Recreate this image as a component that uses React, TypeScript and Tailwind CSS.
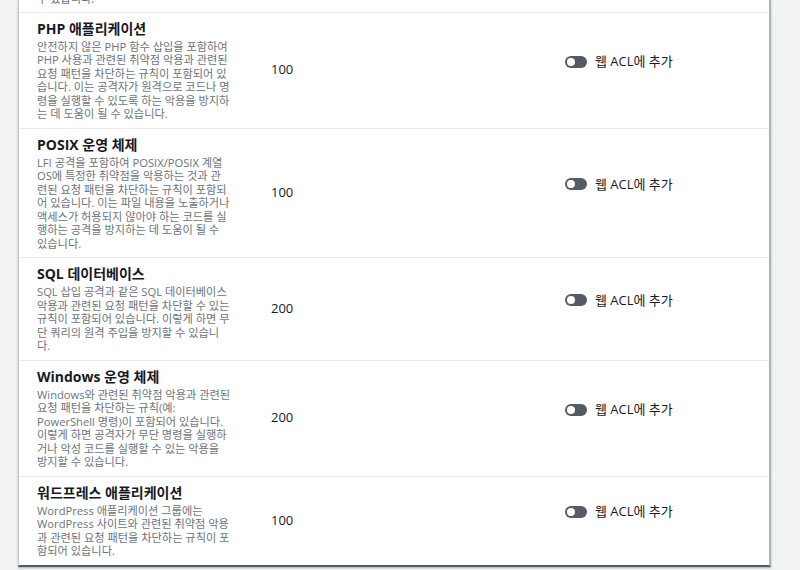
import React from 'react';

type Rule = {
  title: string;
  lines: string[];
  capacity: number;
};

const RULES: Rule[] = [
  {
    title: 'PHP 애플리케이션',
    lines: [
      '안전하지 않은 PHP 함수 삽입을 포함하여',
      'PHP 사용과 관련된 취약점 악용과 관련된',
      '요청 패턴을 차단하는 규칙이 포함되어 있',
      '습니다. 이는 공격자가 원격으로 코드나 명',
      '령을 실행할 수 있도록 하는 악용을 방지하',
      '는 데 도움이 될 수 있습니다.',
    ],
    capacity: 100,
  },
  {
    title: 'POSIX 운영 체제',
    lines: [
      'LFI 공격을 포함하여 POSIX/POSIX 계열',
      'OS에 특정한 취약점을 악용하는 것과 관',
      '련된 요청 패턴을 차단하는 규칙이 포함되',
      '어 있습니다. 이는 파일 내용을 노출하거나',
      '액세스가 허용되지 않아야 하는 코드를 실',
      '행하는 공격을 방지하는 데 도움이 될 수',
      '있습니다.',
    ],
    capacity: 100,
  },
  {
    title: 'SQL 데이터베이스',
    lines: [
      'SQL 삽입 공격과 같은 SQL 데이터베이스',
      '악용과 관련된 요청 패턴을 차단할 수 있는',
      '규칙이 포함되어 있습니다. 이렇게 하면 무',
      '단 쿼리의 원격 주입을 방지할 수 있습니',
      '다.',
    ],
    capacity: 200,
  },
  {
    title: 'Windows 운영 체제',
    lines: [
      'Windows와 관련된 취약점 악용과 관련된',
      '요청 패턴을 차단하는 규칙(예:',
      'PowerShell 명령)이 포함되어 있습니다.',
      '이렇게 하면 공격자가 무단 명령을 실행하',
      '거나 악성 코드를 실행할 수 있는 악용을',
      '방지할 수 있습니다.',
    ],
    capacity: 200,
  },
  {
    title: '워드프레스 애플리케이션',
    lines: [
      'WordPress 애플리케이션 그룹에는',
      'WordPress 사이트와 관련된 취약점 악용',
      '과 관련된 요청 패턴을 차단하는 규칙이 포',
      '함되어 있습니다.',
    ],
    capacity: 100,
  },
];

function Toggle() {
  return (
    <span className="relative inline-flex h-[12px] w-[22px] shrink-0 items-center rounded-full bg-[#545b64]">
      <span className="ml-[2px] h-[8px] w-[8px] rounded-full bg-white" />
    </span>
  );
}

function RuleRow({ rule, last }: { rule: Rule; last: boolean }) {
  return (
    <div
      className={
        'grid grid-cols-[234px_294px_1fr] ' +
        (last ? '' : 'border-b border-[#eaeded]')
      }
    >
      <div className="px-[18px] pt-[7px] pb-[7px]">
        <div className="text-[14px] leading-[18px] font-bold text-[#16191f] whitespace-nowrap">
          {rule.title}
        </div>
        <div className="mt-[2px] text-[11.2px] leading-[13.5px] text-[#6b737b]">
          {rule.lines.map((l, i) => (
            <div key={i} className="whitespace-nowrap">
              {l}
            </div>
          ))}
        </div>
      </div>
      <div className="flex items-center pl-[18px] text-[13px] text-[#16191f]">
        {rule.capacity}
      </div>
      <div className="flex items-center pl-[18px] pb-[17px]">
        <div className="flex items-center gap-[8px]">
          <Toggle />
          <span className="text-[13px] text-[#16191f] whitespace-nowrap">웹 ACL에 추가</span>
        </div>
      </div>
    </div>
  );
}

export default function App() {
  return (
    <div
      className="h-[570px] w-[800px] overflow-hidden bg-[#f2f3f3]"
      style={{ fontFamily: '"Open Sans", "Noto Sans CJK KR", sans-serif' }}
    >
      <div className="ml-[18px] w-[753px] overflow-hidden bg-white border-l border-[#c6cacc] border-r-2 border-r-[#aab7b8] border-b-2 border-b-[#545b64] shadow-[0_1px_2px_rgba(0,28,36,0.3)]">
        {/* tail of the previous row */}
        <div className="border-b border-[#eaeded] px-[18px] pb-[6px]">
          <div className="-mt-[8px] text-[11.2px] leading-[13.5px] text-[#6b737b]">수 있습니다.</div>
        </div>
        {RULES.map((r, i) => (
          <RuleRow key={r.title} rule={r} last={i === RULES.length - 1} />
        ))}
      </div>
    </div>
  );
}
